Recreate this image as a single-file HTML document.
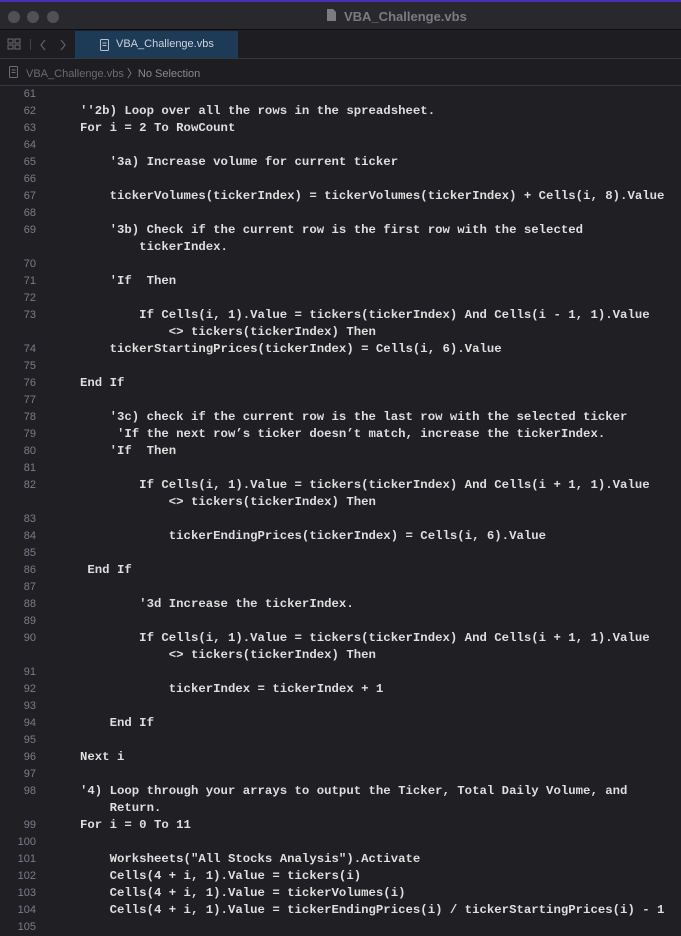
<!DOCTYPE html>
<html><head><style>
body{margin:0;width:681px;height:931px;overflow:hidden;background:#1f1f24;font-family:"Liberation Sans",sans-serif;position:relative}
.title{position:absolute;left:0;top:0;width:681px;height:30px;background:#29282d;border-top:2px solid #4a2fb0;box-sizing:border-box;border-bottom:1px solid #0e0e10}
.dot{position:absolute;top:9px;width:12px;height:12px;border-radius:50%;background:#515055}
.ttl{position:absolute;left:344px;top:7px;color:#7c7b80;font-size:13px;font-weight:bold}
.tabs{position:absolute;left:0;top:31px;width:681px;height:27px;background:#1e1d22;border-bottom:1px solid #38373c}
.tab{position:absolute;left:75px;top:0;width:163px;height:27px;background:#1d3a57;color:#c9d3de;font-size:11px}
.crumb{position:absolute;left:0;top:59px;width:681px;height:26px;background:#1e1d22;border-bottom:1px solid #38373c;color:#6c6b70;font-size:11px}
.code{position:absolute;left:0;top:86px;width:681px}
.r{height:17px;position:relative}
.n{position:absolute;right:645px;top:0;color:#7d7d83;font:11px/17px "Liberation Sans",sans-serif}
.t{position:absolute;left:50.4px;top:0;white-space:pre;color:#dedede;font:bold 12.33px/17px "Liberation Mono",monospace}
</style></head><body>
<div class="title">
<div class="dot" style="left:8px"></div><div class="dot" style="left:27px"></div><div class="dot" style="left:47px"></div>
<svg style="position:absolute;left:326px;top:6px" width="11" height="14"><path d="M1 1h6l3 3v9H1z" fill="#7c7b80"/></svg>
<div class="ttl">VBA_Challenge.vbs</div></div>
<div class="tabs">
<svg style="position:absolute;left:7px;top:7px" width="14" height="13" fill="none" stroke="#6e6d72"><rect x="1" y="1" width="5" height="4"/><rect x="8" y="1" width="5" height="4"/><rect x="1" y="7" width="5" height="4"/><rect x="8" y="7" width="5" height="4"/></svg>
<div style="position:absolute;left:30px;top:8px;width:1px;height:11px;background:#444"></div>
<svg style="position:absolute;left:40px;top:8px" width="30" height="12" fill="none" stroke="#5e5d62" stroke-width="1.3"><path d="M5 1L1 6l4 5M21 1l4 5-4 5"/></svg>
<div class="tab"><svg style="position:absolute;left:25px;top:8px" width="9" height="12" fill="none" stroke="#b7c2cf"><rect x="0.5" y="0.5" width="8" height="11" rx="1"/><path d="M2.5 4h4M2.5 6.5h4"/></svg><span style="position:absolute;left:41px;top:7px">VBA_Challenge.vbs</span></div>
</div>
<div class="crumb"><svg style="position:absolute;left:9px;top:7px" width="9" height="12" fill="none" stroke="#6c6b70"><rect x="0.5" y="0.5" width="8" height="11" rx="1"/><path d="M2.5 4h4M2.5 6.5h4"/></svg><span style="position:absolute;left:26px;top:6px">VBA_Challenge.vbs <span style="color:#8a898e">〉No Selection</span></span></div>
<div class="code">
<div class="r"><span class="n">61</span></div>
<div class="r"><span class="n">62</span><span class="t">    ''2b) Loop over all the rows in the spreadsheet.</span></div>
<div class="r"><span class="n">63</span><span class="t">    For i = 2 To RowCount</span></div>
<div class="r"><span class="n">64</span></div>
<div class="r"><span class="n">65</span><span class="t">        '3a) Increase volume for current ticker</span></div>
<div class="r"><span class="n">66</span></div>
<div class="r"><span class="n">67</span><span class="t">        tickerVolumes(tickerIndex) = tickerVolumes(tickerIndex) + Cells(i, 8).Value</span></div>
<div class="r"><span class="n">68</span></div>
<div class="r"><span class="n">69</span><span class="t">        '3b) Check if the current row is the first row with the selected</span></div>
<div class="r"><span class="t">            tickerIndex.</span></div>
<div class="r"><span class="n">70</span></div>
<div class="r"><span class="n">71</span><span class="t">        'If  Then</span></div>
<div class="r"><span class="n">72</span></div>
<div class="r"><span class="n">73</span><span class="t">            If Cells(i, 1).Value = tickers(tickerIndex) And Cells(i - 1, 1).Value</span></div>
<div class="r"><span class="t">                &lt;&gt; tickers(tickerIndex) Then</span></div>
<div class="r"><span class="n">74</span><span class="t">        tickerStartingPrices(tickerIndex) = Cells(i, 6).Value</span></div>
<div class="r"><span class="n">75</span></div>
<div class="r"><span class="n">76</span><span class="t">    End If</span></div>
<div class="r"><span class="n">77</span></div>
<div class="r"><span class="n">78</span><span class="t">        '3c) check if the current row is the last row with the selected ticker</span></div>
<div class="r"><span class="n">79</span><span class="t">         'If the next row’s ticker doesn’t match, increase the tickerIndex.</span></div>
<div class="r"><span class="n">80</span><span class="t">        'If  Then</span></div>
<div class="r"><span class="n">81</span></div>
<div class="r"><span class="n">82</span><span class="t">            If Cells(i, 1).Value = tickers(tickerIndex) And Cells(i + 1, 1).Value</span></div>
<div class="r"><span class="t">                &lt;&gt; tickers(tickerIndex) Then</span></div>
<div class="r"><span class="n">83</span></div>
<div class="r"><span class="n">84</span><span class="t">                tickerEndingPrices(tickerIndex) = Cells(i, 6).Value</span></div>
<div class="r"><span class="n">85</span></div>
<div class="r"><span class="n">86</span><span class="t">     End If</span></div>
<div class="r"><span class="n">87</span></div>
<div class="r"><span class="n">88</span><span class="t">            '3d Increase the tickerIndex.</span></div>
<div class="r"><span class="n">89</span></div>
<div class="r"><span class="n">90</span><span class="t">            If Cells(i, 1).Value = tickers(tickerIndex) And Cells(i + 1, 1).Value</span></div>
<div class="r"><span class="t">                &lt;&gt; tickers(tickerIndex) Then</span></div>
<div class="r"><span class="n">91</span></div>
<div class="r"><span class="n">92</span><span class="t">                tickerIndex = tickerIndex + 1</span></div>
<div class="r"><span class="n">93</span></div>
<div class="r"><span class="n">94</span><span class="t">        End If</span></div>
<div class="r"><span class="n">95</span></div>
<div class="r"><span class="n">96</span><span class="t">    Next i</span></div>
<div class="r"><span class="n">97</span></div>
<div class="r"><span class="n">98</span><span class="t">    '4) Loop through your arrays to output the Ticker, Total Daily Volume, and</span></div>
<div class="r"><span class="t">        Return.</span></div>
<div class="r"><span class="n">99</span><span class="t">    For i = 0 To 11</span></div>
<div class="r"><span class="n">100</span></div>
<div class="r"><span class="n">101</span><span class="t">        Worksheets("All Stocks Analysis").Activate</span></div>
<div class="r"><span class="n">102</span><span class="t">        Cells(4 + i, 1).Value = tickers(i)</span></div>
<div class="r"><span class="n">103</span><span class="t">        Cells(4 + i, 1).Value = tickerVolumes(i)</span></div>
<div class="r"><span class="n">104</span><span class="t">        Cells(4 + i, 1).Value = tickerEndingPrices(i) / tickerStartingPrices(i) - 1</span></div>
<div class="r"><span class="n">105</span></div>
</div>
</body></html>
